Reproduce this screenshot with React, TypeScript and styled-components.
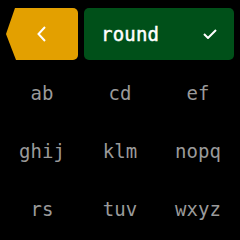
import React from "react";
import styled, { createGlobalStyle } from "styled-components";

const GlobalStyle = createGlobalStyle`
  html, body {
    margin: 0;
    padding: 0;
    background: #000;
  }
  body {
    width: 240px;
    height: 240px;
    overflow: hidden;
    font-family: "DejaVu Sans Mono", "Liberation Mono", monospace;
  }
`;

const Screen = styled.div`
  width: 240px;
  height: 240px;
  display: flex;
  flex-direction: column;
`;

const Header = styled.div`
  display: flex;
  gap: 6px;
  padding: 8px 6px 0 6px;
  height: 52px;
`;

const BackButton = styled.div`
  width: 72px;
  height: 52px;
  background: #e3a000;
  border-radius: 0 5px 5px 0;
  clip-path: polygon(9px 0, 100% 0, 100% 100%, 10px 100%, 0 26px);
  display: flex;
  align-items: center;
  justify-content: center;
  padding-right: 1px;
  box-sizing: border-box;
`;

const InputBox = styled.div`
  flex: 1;
  height: 52px;
  background: #005019;
  border-radius: 5px;
  display: flex;
  align-items: center;
  justify-content: space-between;
  padding: 0 17px 0 17px;
  box-sizing: border-box;
`;

const InputText = styled.span`
  color: #fff;
  font-size: 19px;
  -webkit-text-stroke: 0.45px #fff;
  letter-spacing: 0.2px;
`;

const Keys = styled.div`
  display: grid;
  grid-template-columns: repeat(3, 78px);
  grid-auto-rows: 58px;
  padding: 4px 3px 0 3px;
`;

const Key = styled.div`
  display: flex;
  align-items: center;
  justify-content: center;
  color: #9a9a9a;
  font-size: 19px;
`;

const keys = ["ab", "cd", "ef", "ghij", "klm", "nopq", "rs", "tuv", "wxyz"];

export default function App() {
  return (
    <>
      <GlobalStyle />
      <Screen>
        <Header>
          <BackButton>
            <svg width="12" height="16" viewBox="0 0 12 16">
              <path d="M9 1 L2.5 8 L9 15" fill="none" stroke="#fff" strokeWidth="2" />
            </svg>
          </BackButton>
          <InputBox>
            <InputText>round</InputText>
            <svg width="14" height="10" viewBox="0 0 14 10">
              <path d="M1 5 L5 9 L13 1" fill="none" stroke="#fff" strokeWidth="2" />
            </svg>
          </InputBox>
        </Header>
        <Keys>
          {keys.map((k) => (
            <Key key={k}>{k}</Key>
          ))}
        </Keys>
      </Screen>
    </>
  );
}
